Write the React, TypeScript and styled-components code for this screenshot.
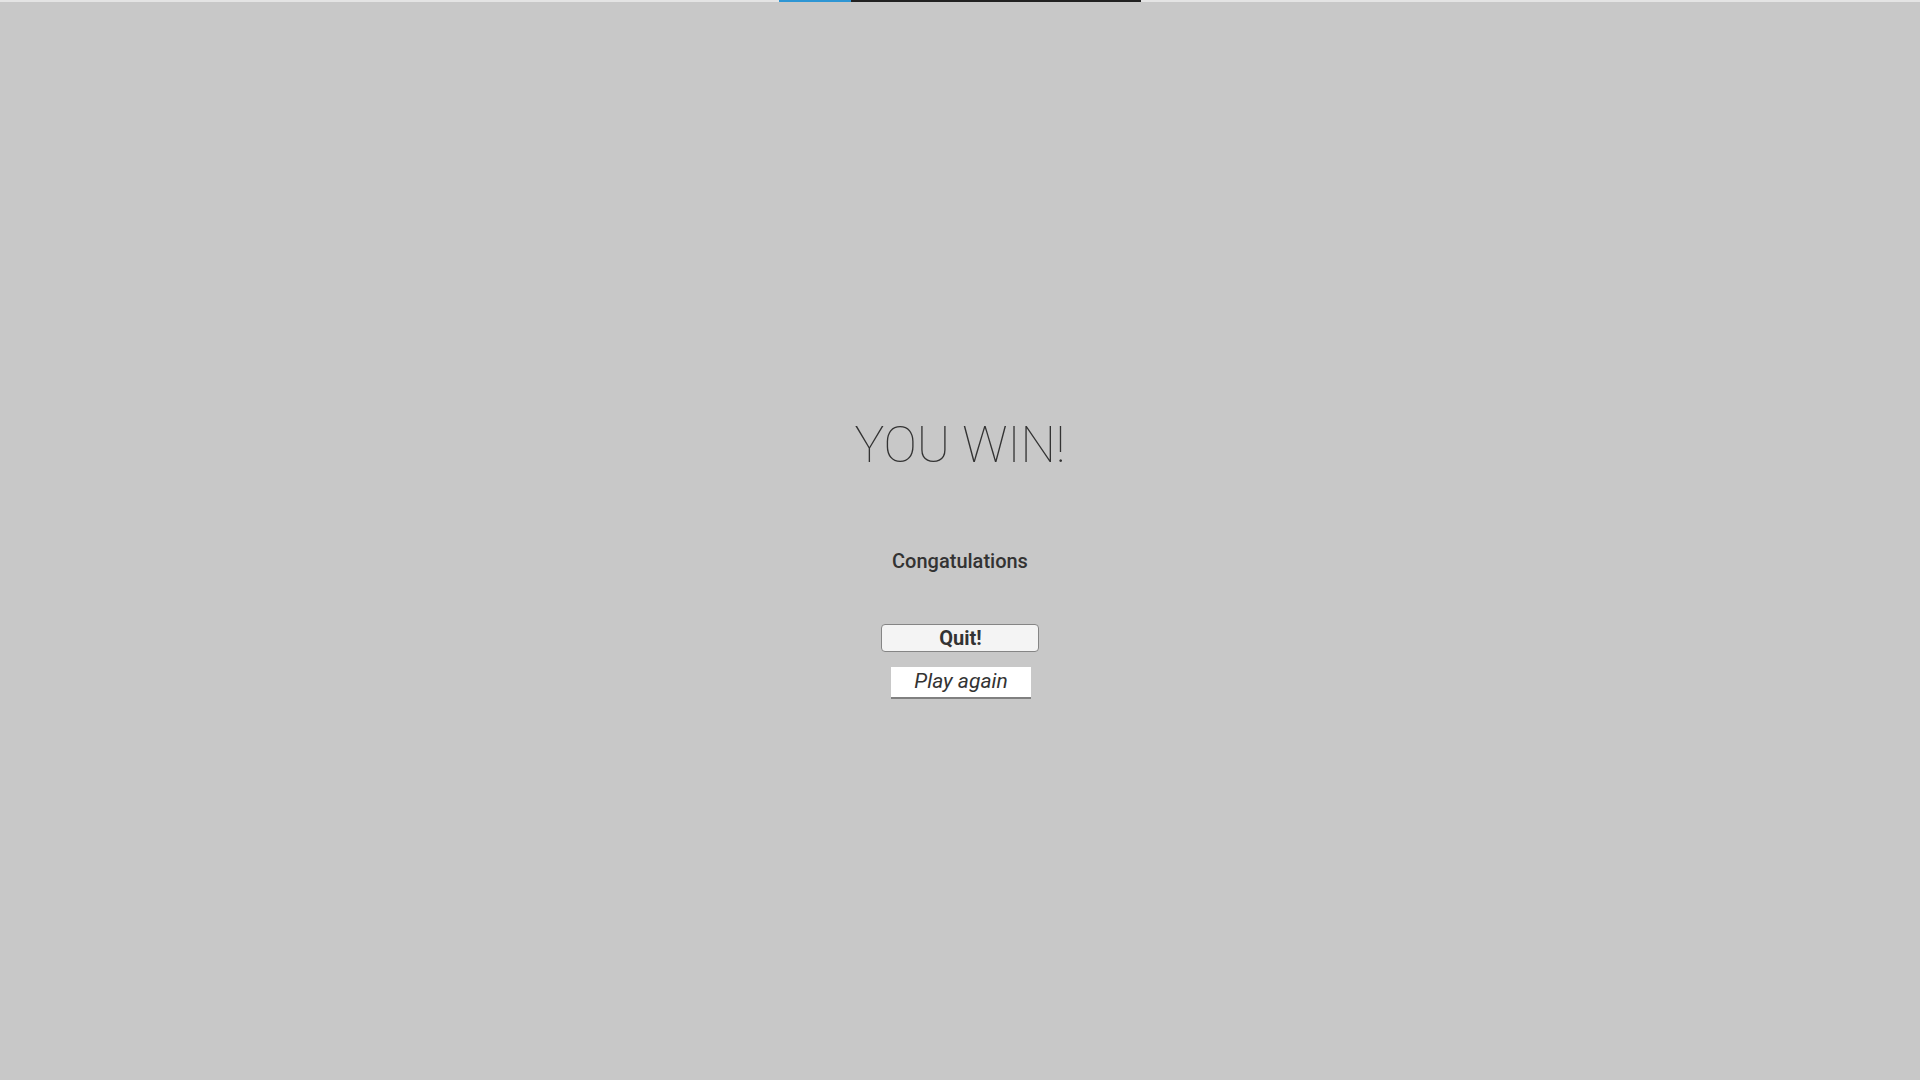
import React from "react";
import styled, { createGlobalStyle } from "styled-components";

const GlobalStyle = createGlobalStyle`
  html, body {
    margin: 0;
    padding: 0;
    background: #c8c8c8;
  }
  body {
    font-family: Roboto, "Liberation Sans", sans-serif;
    color: #333;
  }
`;

type SegmentProps = {
  $color: string;
  $width: number;
};

const Screen = styled.div`
  width: 1920px;
  height: 1080px;
  background: #c8c8c8;
  display: flex;
  flex-direction: column;
  overflow: hidden;
`;

const ProgressStrip = styled.div`
  height: 2px;
  background: #e4e4e4;
  display: flex;
  padding-left: 779px;
`;

const Segment = styled.div<SegmentProps>`
  width: ${(p) => p.$width}px;
  height: 2px;
  background: ${(p) => p.$color};
`;

const Content = styled.div`
  display: flex;
  flex-direction: column;
  align-items: center;
  padding-top: 413px;
`;

const Title = styled.h1`
  margin: 0;
  font-family: Roboto, sans-serif;
  font-weight: 100;
  font-size: 50px;
  line-height: 60px;
  color: #333;
`;

const Subtitle = styled.div`
  margin-top: 75px;
  font-family: Roboto, sans-serif;
  font-weight: 500;
  font-size: 20px;
  line-height: 22px;
  color: #333;
`;

const Actions = styled.div`
  margin-top: 52px;
  display: flex;
  flex-direction: column;
  align-items: center;
  gap: 15px;
`;

const QuitButton = styled.button`
  box-sizing: border-box;
  width: 158px;
  height: 28px;
  padding: 0 0 0 1px;
  background: #f4f4f4;
  border: 1px solid #858585;
  border-radius: 4px;
  font-family: Roboto, sans-serif;
  font-weight: 700;
  font-size: 20px;
  line-height: 27px;
  color: #333;
  cursor: pointer;
`;

const PlayAgainButton = styled.button`
  box-sizing: border-box;
  width: 140px;
  height: 32px;
  margin-left: 2px;
  padding: 0 0 3px;
  background: #fff;
  border: none;
  border-bottom: 2px solid #808080;
  border-radius: 0;
  font-family: Roboto, sans-serif;
  font-style: italic;
  font-weight: 400;
  font-size: 21px;
  line-height: 26px;
  color: #333;
  cursor: pointer;
`;

const App = () => {
  return (
    <Screen>
      <GlobalStyle />
      <ProgressStrip>
        <Segment $color="#2e96d4" $width={72} />
        <Segment $color="#222" $width={290} />
      </ProgressStrip>
      <Content>
        <Title>YOU WIN!</Title>
        <Subtitle>Congatulations</Subtitle>
        <Actions>
          <QuitButton>Quit!</QuitButton>
          <PlayAgainButton>Play again</PlayAgainButton>
        </Actions>
      </Content>
    </Screen>
  );
};

export default App;
